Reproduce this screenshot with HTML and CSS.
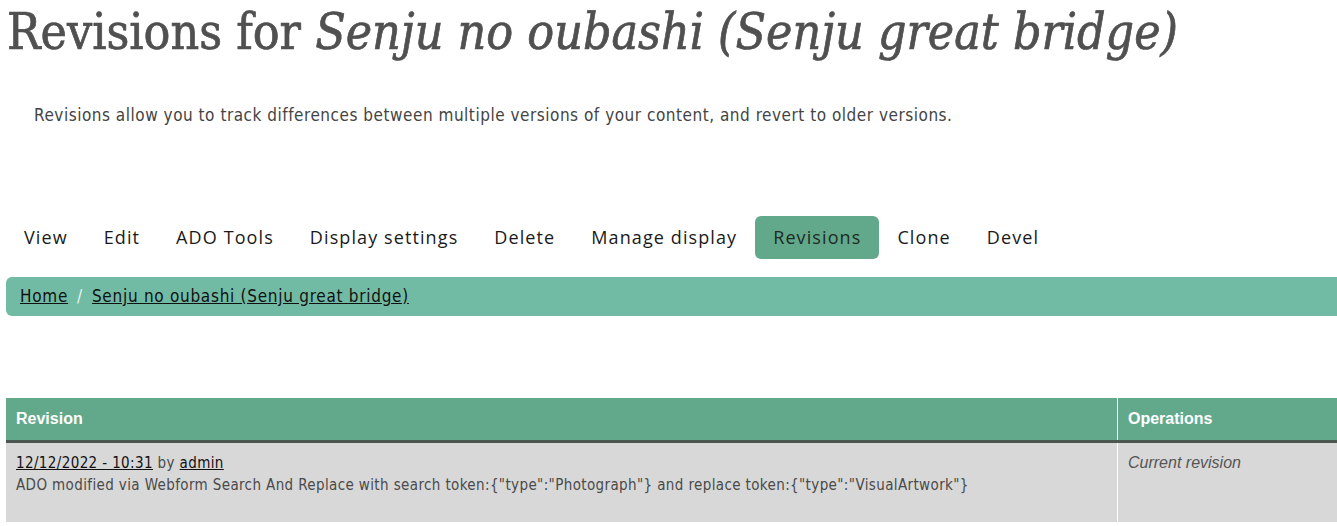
FILE: index.html
```html
<!DOCTYPE html>
<html lang="en">
<head>
<meta charset="utf-8">
<title>Revisions</title>
<link rel="stylesheet" href="styles.css">
</head>
<body>
<div class="page">
  <h1 class="title">Revisions for <em>Senju no oubashi (Senju great bridge)</em></h1>
  <p class="intro">Revisions allow you to track differences between multiple versions of your content, and revert to older versions.</p>
  <nav class="tabs">
    <a class="tab" href="#">View</a>
    <a class="tab" href="#">Edit</a>
    <a class="tab" href="#">ADO Tools</a>
    <a class="tab" href="#">Display settings</a>
    <a class="tab" href="#">Delete</a>
    <a class="tab" href="#">Manage display</a>
    <a class="tab active" href="#">Revisions</a>
    <a class="tab" href="#">Clone</a>
    <a class="tab" href="#">Devel</a>
  </nav>
  <div class="crumbs">
    <a href="#">Home</a><span class="sep">/</span><a href="#">Senju no oubashi (Senju great bridge)</a>
  </div>
  <table class="revs">
    <thead>
      <tr><th class="c1">Revision</th><th class="c2">Operations</th></tr>
    </thead>
    <tbody>
      <tr>
        <td class="c1">
          <div><a href="#">12/12/2022 - 10:31</a> by <a href="#">admin</a></div>
          <div class="msg">ADO modified via Webform Search And Replace with search token:{"type":"Photograph"} and replace token:{"type":"VisualArtwork"}</div>
        </td>
        <td class="c2"><em>Current revision</em></td>
      </tr>
    </tbody>
  </table>
</div>
</body>
</html>
```
FILE: styles.css
```css
html, body { margin: 0; padding: 0; background: #fff; }
body { width: 1337px; overflow: hidden; }
.page { padding: 0 0 0 6px; }

.title {
  margin: 0;
  padding: 2px 0 0 1px;
  font-family: "DejaVu Serif Condensed", "DejaVu Serif", serif;
  font-stretch: condensed;
  font-weight: normal;
  font-size: 49.6px;
  line-height: 60px;
  color: #505050;
  -webkit-text-stroke: 0.7px #505050;
  white-space: nowrap;
}
.title em { font-style: italic; }

.intro {
  margin: 42px 0 0 28px;
  font-family: "DejaVu Sans Condensed", "Liberation Sans", sans-serif;
  font-stretch: condensed;
  font-size: 17px;
  letter-spacing: 0.52px;
  line-height: 22px;
  color: #444;
}

.tabs {
  display: flex;
  margin-top: 90px;
  padding-left: 0;
}
.tab {
  display: block;
  padding: 0 18px;
  height: 43px;
  line-height: 43px;
  font-family: "Open Sans", "Noto Sans", sans-serif;
  font-size: 18px;
  color: #1a1a1a;
  text-decoration: none;
  border-radius: 6px;
  letter-spacing: 1.1px;
}
.tab.active { background: #62a98c; color: #1f2a24; }

.crumbs {
  margin-top: 18px;
  height: 39px;
  line-height: 39px;
  background: #71bba5;
  border-radius: 6px 0 0 6px;
  padding-left: 14px;
  font-family: "DejaVu Sans Condensed", "Liberation Sans", sans-serif;
  font-stretch: condensed;
  font-size: 17px;
  letter-spacing: 0.72px;
}
.crumbs a { color: #111; text-decoration: underline; }
.crumbs .sep { color: #e8f3ef; padding: 0 9px; }

.revs {
  margin-top: 82px;
  width: calc(100% + 40px);
  border-collapse: collapse;
  font-family: "DejaVu Sans Condensed", "Liberation Sans", sans-serif;
  font-stretch: condensed;
  font-size: 15px;
  letter-spacing: 0.38px;
}
.revs th {
  background: #62a98c;
  color: #fff;
  text-align: left;
  font-family: "Liberation Sans", Arial, sans-serif;
  font-weight: bold;
  font-size: 16px;
  letter-spacing: 0;
  height: 42px;
  padding: 0 10px;
  border-bottom: 3px solid #4a564f;
}
.revs th.c1, .revs td.c1 { width: 1091px; border-right: 1px solid #fff; }
.revs td {
  background: #d8d8d8;
  vertical-align: top;
  padding: 9px 10px 26px 10px;
  color: #4a4a4a;
  line-height: 22px;
  border-bottom: 2px solid #fff;
}
.revs td a { color: #111; }
.revs td.c2 em {
  font-family: "Liberation Sans", Arial, sans-serif;
  font-size: 16px;
  letter-spacing: 0;
  color: #555;
}
```
